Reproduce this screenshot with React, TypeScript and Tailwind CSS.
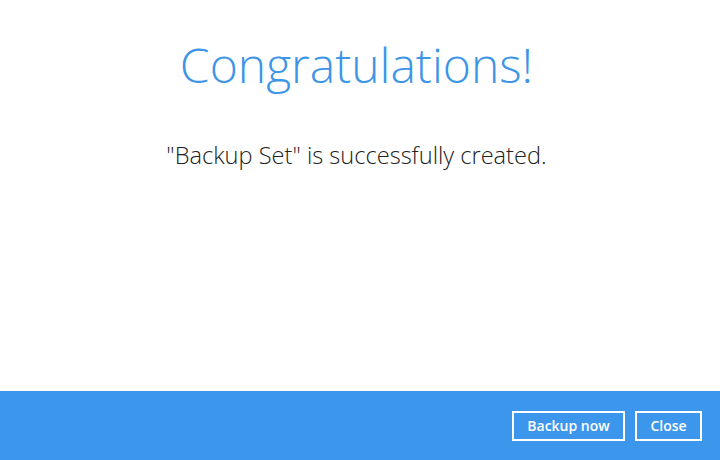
export default function App() {
  return (
    <div className="w-[720px] h-[460px] flex flex-col bg-white" style={{ fontFamily: '"Open Sans", sans-serif' }}>
      <div className="flex-1 flex flex-col items-center pr-[7px]">
        <h1 className="mt-[32px] text-[48px] leading-[66px] font-light text-[#3d95e6]">Congratulations!</h1>
        <p className="mt-[42px] text-[23.6px] leading-[30px] font-light text-[#222]">"Backup Set" is successfully created.</p>
      </div>
      <div className="h-[69px] bg-[#3c96eb] flex items-center justify-end gap-[10px] pr-[18px]">
        <button className="h-[30px] w-[113px] border-2 border-white text-white text-[14px] font-semibold">Backup now</button>
        <button className="h-[30px] w-[67px] border-2 border-white text-white text-[14px] font-semibold">Close</button>
      </div>
    </div>
  );
}
